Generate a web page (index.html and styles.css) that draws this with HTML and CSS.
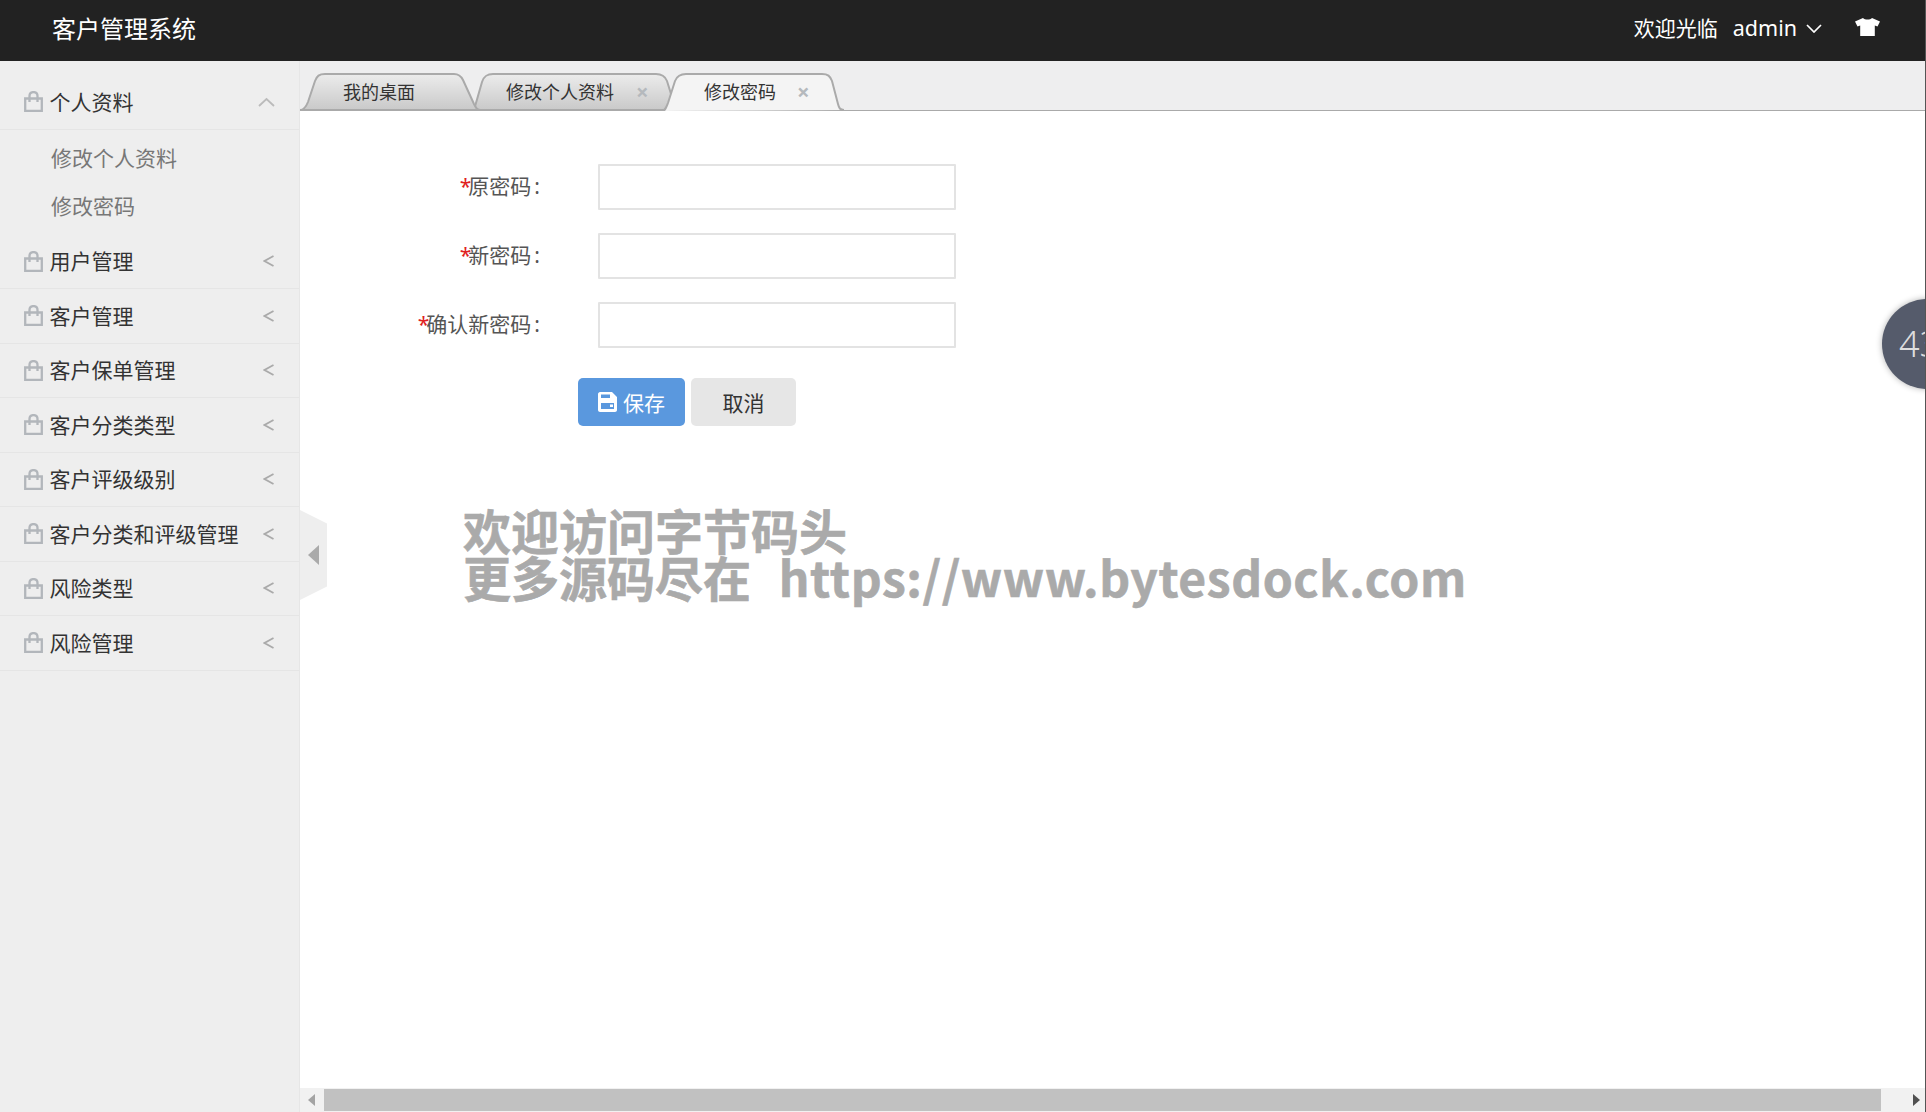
FILE: index.html
```html
<!DOCTYPE html>
<html lang="zh-CN">

<head>
    <meta charset="UTF-8">
    <meta name="viewport" content="width=device-width, initial-scale=1.0">
    <title>客户管理系统</title>
    <link rel="stylesheet" href="styles.css">
</head>

<body>
    <svg class="defs" width="0" height="0">
        <defs>
            <linearGradient id="tabfill" x1="0" y1="0" x2="0" y2="1">
                <stop offset="0" stop-color="#ececec"></stop>
                <stop offset="1" stop-color="#c9c9c9"></stop>
            </linearGradient>
            <symbol id="bag" viewBox="0 0 19 21">
                <path d="M1.200 7.500H17.800V19.800H1.200Z M5.500 11V5C5.500 2.500 7.200 1.100 9.500 1.100C11.800 1.100 13.500 2.500 13.500 5V11" fill="none" stroke="currentColor" stroke-width="2.300"></path>
            </symbol>
            <symbol id="lt" viewBox="0 0 11 12">
                <path d="M10.500 1L1.500 6L10.500 11" fill="none" stroke="currentColor" stroke-width="1.800"></path>
            </symbol>
        </defs>
    </svg>

    <div class="header">
        <div class="logo">客户管理系统</div>
        <div class="user">
            <span class="welcome">欢迎光临</span>
            <span class="name">admin</span>
            <svg class="caret" width="16" height="9" viewBox="0 0 16 9"><path d="M1 1L8 8L15 1" fill="none" stroke="#fff" stroke-width="1.700"></path></svg>
            <svg class="shirt" width="25" height="18" viewBox="0 0 25 18"><path d="M8 0C10 2 15 2 17 0L25 3.500L22.500 8.500L19.800 7.500V18H5.200V7.500L2.500 8.500L0 3.500Z" fill="#fff"></path></svg>
        </div>
    </div>

    <div class="main">
        <div class="sidebar">
            <div class="menu-item">
                <svg class="bag"><use href="#bag"></use></svg>
                <span class="menu-text">个人资料</span>
                <svg class="up" width="17" height="10" viewBox="0 0 17 10"><path d="M1 9L8.500 2L16 9" fill="none" stroke="#bbb" stroke-width="1.800"></path></svg>
            </div>
            <div class="submenu">
                <a class="sub-item">修改个人资料</a>
                <a class="sub-item">修改密码</a>
            </div>
            <div class="menu-item"><svg class="bag"><use href="#bag"></use></svg><span class="menu-text">用户管理</span><svg class="lt"><use href="#lt"></use></svg></div>
            <div class="menu-item"><svg class="bag"><use href="#bag"></use></svg><span class="menu-text">客户管理</span><svg class="lt"><use href="#lt"></use></svg></div>
            <div class="menu-item"><svg class="bag"><use href="#bag"></use></svg><span class="menu-text">客户保单管理</span><svg class="lt"><use href="#lt"></use></svg></div>
            <div class="menu-item"><svg class="bag"><use href="#bag"></use></svg><span class="menu-text">客户分类类型</span><svg class="lt"><use href="#lt"></use></svg></div>
            <div class="menu-item"><svg class="bag"><use href="#bag"></use></svg><span class="menu-text">客户评级级别</span><svg class="lt"><use href="#lt"></use></svg></div>
            <div class="menu-item"><svg class="bag"><use href="#bag"></use></svg><span class="menu-text">客户分类和评级管理</span><svg class="lt"><use href="#lt"></use></svg></div>
            <div class="menu-item"><svg class="bag"><use href="#bag"></use></svg><span class="menu-text">风险类型</span><svg class="lt"><use href="#lt"></use></svg></div>
            <div class="menu-item"><svg class="bag"><use href="#bag"></use></svg><span class="menu-text">风险管理</span><svg class="lt"><use href="#lt"></use></svg></div>
        </div>

        <div class="content">
            <div class="tabbar">
                <div class="tab tab-home">
                    <svg class="tab-bg" width="180" height="38" viewBox="0 0 180 38"><path d="M0 37C4 37 6 34 8 29L15 8C17 3 19 1 25 1H154C159 1 161 3 163 7L174 31C176 35 177 37 180 37Z" fill="url(#tabfill)" stroke="#aaa" stroke-width="2"></path></svg>
                    <span class="tab-text">我的桌面</span>
                </div>
                <div class="tab tab-info">
                    <svg class="tab-bg" width="205" height="38" viewBox="0 0 205 38"><path d="M2 37L10 9C12 3 15 1 21 1H184C190 1 193 3 195 8L204 37Z" fill="url(#tabfill)" stroke="#aaa" stroke-width="2"></path></svg>
                    <span class="tab-text">修改个人资料</span>
                    <span class="tab-close">×</span>
                </div>
                <div class="tab tab-pwd">
                    <svg class="tab-bg" width="182" height="38" viewBox="0 0 182 38"><path d="M0 38C3 38 4 35 6 30L13 8C15 3 18 1 24 1H160C166 1 168 3 170 8L176 31C177 35 178 37 182 37" fill="#f4f4f4" stroke="#aaa" stroke-width="2"></path></svg>
                    <span class="tab-text">修改密码</span>
                    <span class="tab-close">×</span>
                </div>
            </div>

            <form class="pwd-form">
                <div class="form-row">
                    <label class="form-label"><i>*</i>原密码<b>:</b></label>
                    <input class="form-input" type="password">
                </div>
                <div class="form-row">
                    <label class="form-label"><i>*</i>新密码<b>:</b></label>
                    <input class="form-input" type="password">
                </div>
                <div class="form-row">
                    <label class="form-label"><i>*</i>确认新密码<b>:</b></label>
                    <input class="form-input" type="password">
                </div>
                <div class="form-btns">
                    <button type="button" class="btn btn-save">
                        <svg width="19" height="20" viewBox="0 0 19 20"><path fill-rule="evenodd" d="M2 0H14L19 5V18C19 19 18 20 17 20H2C1 20 0 19 0 18V2C0 1 1 0 2 0ZM3 2.500V6H12V2.500ZM3 11V17H16V11ZM12 12.500H15V15H12Z" fill="#fff"></path></svg>
                        保存
                    </button>
                    <button type="button" class="btn btn-cancel">取消</button>
                </div>
            </form>

            <div class="scrollbar">
                <span class="arrow-left"></span>
                <div class="thumb"></div>
                <span class="arrow-right"></span>
            </div>
        </div>
    </div>

    <div class="collapse"><span class="collapse-arrow"></span></div>
    <div class="watermark">欢迎访问字节码头<br>更多源码尽在&nbsp; <span class="watermark-url">https://www.bytesdock.com</span></div>
    <div class="counter">43</div>
</body>

</html>
```

FILE: styles.css
```css
* {
    box-sizing: border-box;
}

html, body {
    height: 100%;
}

body {
    margin: 0;
    font-family: "Noto Sans", "Noto Sans CJK SC", sans-serif;
    display: flex;
    flex-direction: column;
    overflow: hidden;
    position: relative;
    border-right: 1px solid #555;
    color: #333;
}

.defs {
    position: absolute;
}

.header {
    height: 61px;
    flex: none;
    background-color: #222;
    color: #fff;
    display: flex;
    justify-content: space-between;
    align-items: center;
    padding: 0 45px 7px 52px;
}

.logo {
    font-size: 24px;
}

.user {
    display: flex;
    align-items: center;
    font-size: 21px;
}

.name {
    margin-left: 15px;
    font-size: 21.500px;
}

.caret {
    margin-left: 9px;
    margin-top: 2px;
}

.shirt {
    margin-left: 33px;
}

.main {
    flex: 1;
    display: flex;
    min-height: 0;
}

.sidebar {
    width: 300px;
    flex: none;
    background-color: #eee;
    padding-top: 14px;
    border-right: 1px solid #e6e6e6;
}

.menu-item {
    height: 54.5px;
    display: flex;
    align-items: center;
    padding: 0 25px 0 24px;
    border-bottom: 1px solid #e5e5e5;
    font-size: 21px;
}

.bag {
    width: 19px;
    height: 21px;
    color: #b2b6bb;
    flex: none;
}

.menu-text {
    margin-left: 6.5px;
    padding-bottom: 2px;
    flex: 1;
}

.lt {
    width: 11px;
    height: 12px;
    color: #aaa;
}

.up {
    margin-right: -1px;
}

.submenu {
    padding: 5px 0 4px 51px;
}

.sub-item {
    display: block;
    height: 48px;
    line-height: 46px;
    font-size: 21px;
    color: #777;
}

.content {
    flex: 1;
    min-width: 0;
    display: flex;
    flex-direction: column;
    background-color: #fff;
}

.tabbar {
    height: 50px;
    flex: none;
    background-color: #eeeeef;
    border-bottom: 1px solid #aaa;
    display: flex;
    align-items: flex-end;
}

.tab {
    position: relative;
    height: 38px;
    margin-bottom: -1px;
    display: flex;
    align-items: center;
    font-size: 18px;
}

.tab-bg {
    position: absolute;
    left: 0;
    top: 0;
}

.tab-text, .tab-close {
    position: relative;
    padding-bottom: 2px;
}

.tab-home {
    width: 180px;
    padding-left: 43px;
    z-index: 2;
}

.tab-info {
    width: 205px;
    margin-left: -8px;
    padding-left: 34px;
    z-index: 1;
}

.tab-pwd {
    width: 182px;
    margin-left: -15px;
    padding-left: 42px;
    z-index: 3;
}

.tab-close {
    margin-left: 21px;
    font-size: 22px;
    font-weight: 700;
    color: #b5b9bd;
}

.tab-info .tab-close {
    margin-left: 22px;
}

.pwd-form {
    flex: 1;
    padding-top: 53px;
}

.form-row {
    display: flex;
    align-items: center;
    height: 46px;
    margin-bottom: 23px;
}

.form-label {
    width: 240px;
    padding-bottom: 5px;
    text-align: right;
    font-size: 21px;
    color: #555;
}

.form-label i {
    color: #e02020;
    font-style: normal;
    letter-spacing: -3px;
}

.form-label b {
    margin-left: 3px;
    font-weight: 400;
}

.form-input {
    width: 358px;
    height: 46px;
    margin-left: 58px;
    border: 2px solid #e3e3e3;
    border-radius: 1px;
    background-color: #fff;
}

.form-btns {
    display: flex;
    gap: 6px;
    margin-top: 30px;
    padding-left: 278px;
}

.btn {
    height: 48px;
    padding-bottom: 2px;
    border: none;
    border-radius: 5px;
    font-family: inherit;
    font-size: 21px;
    display: flex;
    align-items: center;
    justify-content: center;
    gap: 6px;
}

.btn-save {
    width: 107px;
    background-color: #5a98de;
    color: #fff;
}

.btn-cancel {
    width: 105px;
    background-color: #e6e6e6;
    color: #333;
}

.scrollbar {
    height: 24px;
    flex: none;
    background-color: #f1f1f1;
    display: flex;
    align-items: center;
    padding: 0 5px 0 8px;
}

.thumb {
    height: 22px;
    flex: 1;
    margin: 0 32px 0 9px;
    background-color: #c1c1c1;
}

.arrow-left {
    border-style: solid;
    border-width: 6px 7px 6px 0;
    border-color: transparent #a3a3a3 transparent transparent;
}

.arrow-right {
    border-style: solid;
    border-width: 6px 0 6px 7px;
    border-color: transparent transparent transparent #505050;
}

.collapse {
    position: absolute;
    left: 300px;
    top: 510px;
    width: 27px;
    height: 90px;
    background-color: #eee;
    clip-path: polygon(0 0, 100% 15%, 100% 85%, 0 100%);
    display: flex;
    align-items: center;
    padding-left: 8px;
}

.collapse-arrow {
    border-style: solid;
    border-width: 10px 11px 10px 0;
    border-color: transparent #aaa transparent transparent;
}

.watermark {
    position: absolute;
    left: 463px;
    top: 506px;
    font-family: "Noto Sans CJK SC", sans-serif;
    font-size: 48px;
    font-weight: 700;
    line-height: 47px;
    color: #aaa;
    -webkit-text-stroke: 0.6px #aaa;
    white-space: nowrap;
}

.watermark-url {
    margin-left: 6px;
    letter-spacing: 0.6px;
}

.counter {
    position: absolute;
    left: 1882px;
    top: 299px;
    width: 90px;
    height: 90px;
    padding-left: 17px;
    border-radius: 50%;
    background-color: #555b6b;
    box-shadow: 0 0 6px rgba(0, 0, 0, 0.3);
    color: #ddd;
    font-size: 36px;
    font-weight: 300;
    line-height: 90px;
}
```
